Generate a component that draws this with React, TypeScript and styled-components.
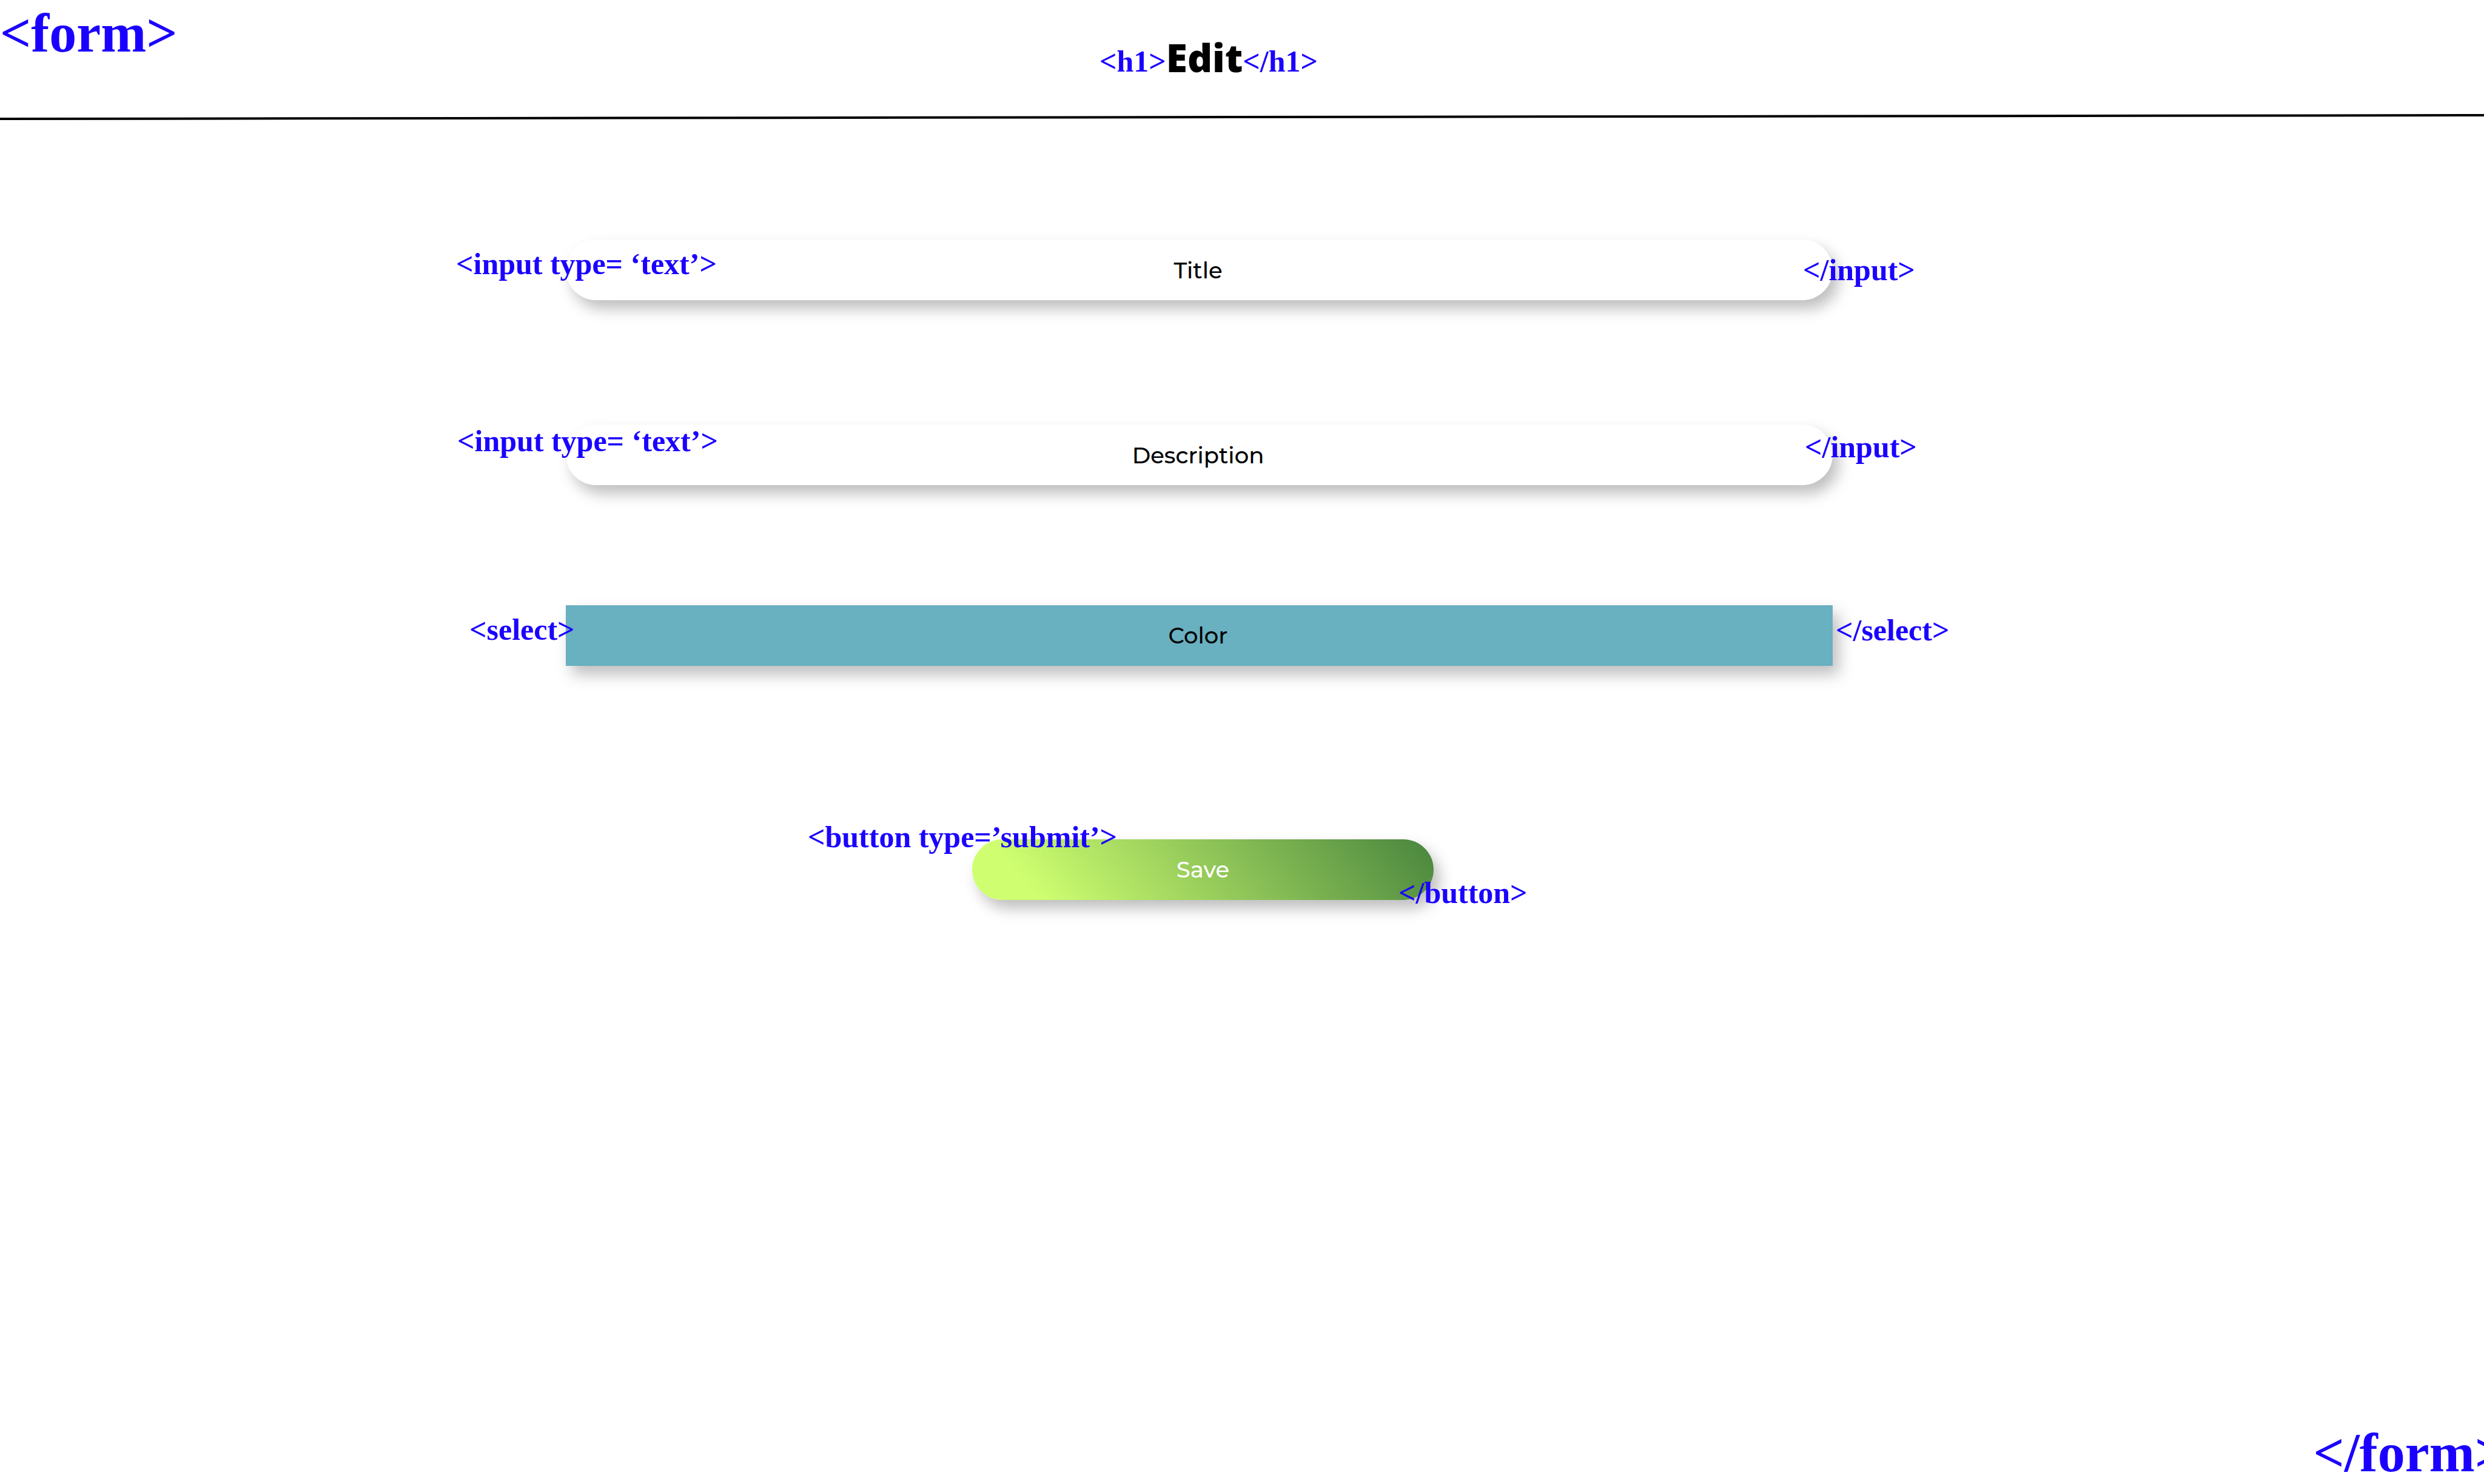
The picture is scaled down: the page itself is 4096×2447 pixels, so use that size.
import React from "react";
import styled, { createGlobalStyle } from "styled-components";

const GlobalStyle = createGlobalStyle`
  *, *::before, *::after { box-sizing: border-box; }
  body { margin: 0; background: #fff; color: #000; overflow-x: hidden; }
`;

const sans = `Montserrat, Inter, "Noto Sans", sans-serif`;
const shadow = "10px 14px 24px rgba(0, 0, 0, 0.26)";

const Form = styled.form`
  display: flex;
  flex-direction: column;
  min-height: 100vh;
  overflow: hidden;
`;

const Header = styled.header`
  display: grid;
  grid-template-columns: 1fr auto 1fr;
  align-items: start;
  height: 188px;
  padding-right: 110px;
`;

const FormTag = styled.span`
  font: bold 90px/110px "Liberation Serif", serif;
  color: #1a00ff;
  white-space: nowrap;
`;

const ClosingFormTag = styled(FormTag)`
  align-self: flex-end;
  margin: auto -36px -4px 0;
`;

const TitleGroup = styled.div`
  display: flex;
  align-items: flex-end;
  grid-column: 2;
  padding-top: 61px;
`;

const Tag = styled.span`
  font: bold 50px/56px "Liberation Serif", serif;
  color: #1a00ff;
  white-space: nowrap;
`;

const Title = styled.h1`
  margin: 0;
  font: 800 64px/68px "Open Sans", sans-serif;
`;

const Rule = styled.svg`
  display: block;
  width: 100%;
  height: 10px;
`;

const Fields = styled.div`
  display: grid;
  grid-template-columns: 933fr 2089fr 1074fr;
  padding-top: 197px;
`;

const Column = styled.div`
  grid-column: 2;
  display: flex;
  flex-direction: column;
  align-items: center;
`;

const Field = styled.div<{ $gap?: number }>`
  position: relative;
  width: 100%;
  margin-top: ${(p) => p.$gap ?? 0}px;
`;

const SubmitField = styled.div`
  position: relative;
  width: 761px;
  margin: 286px 0 0 12px;
`;

const OpenTag = styled(Tag)<{ $x: number; $y: number }>`
  position: absolute;
  left: ${(p) => p.$x}px;
  top: ${(p) => p.$y}px;
`;

const CloseTag = styled(Tag)<{ $x: number; $y: number }>`
  position: absolute;
  left: calc(100% + ${(p) => p.$x}px);
  top: ${(p) => p.$y}px;
`;

const TextInput = styled.input`
  display: block;
  width: 100%;
  height: 100px;
  padding: 0 52px 0 48px;
  border: 0;
  border-radius: 50px;
  background: #fff;
  box-shadow: ${shadow};
  font: 500 37px/48px ${sans};
  text-align: center;
  color: #000;
  &::placeholder { color: #000; opacity: 1; }
`;

const Select = styled.select`
  display: block;
  width: 100%;
  height: 100px;
  padding: 0 52px 0 48px;
  border: 0;
  border-radius: 0;
  appearance: none;
  background: #69b0c0;
  box-shadow: ${shadow};
  font: 500 37px/48px ${sans};
  text-align: center;
  text-align-last: center;
  color: #000;
`;

const SubmitButton = styled.button`
  display: block;
  width: 100%;
  height: 100px;
  border: 0;
  border-radius: 50px;
  background: linear-gradient(50deg, #cfff70 13%, #4c883f 98%);
  box-shadow: ${shadow};
  font: 500 37px/48px ${sans};
  color: #fff;
`;

export default function App() {
  return (
    <>
      <GlobalStyle />
      <Form onSubmit={(e: React.FormEvent) => e.preventDefault()}>
        <Header>
          <FormTag>{"<form>"}</FormTag>
          <TitleGroup>
            <Tag>{"<h1>"}</Tag>
            <Title>Edit</Title>
            <Tag>{"</h1>"}</Tag>
          </TitleGroup>
        </Header>
        <Rule viewBox="0 0 4096 10" preserveAspectRatio="none" aria-hidden="true">
          <line x1="0" y1="8" x2="4096" y2="2" stroke="#000" strokeWidth="4" />
        </Rule>
        <Fields>
          <Column>
            <Field>
              <TextInput id="title" type="text" placeholder="Title" aria-label="Title" />
              <OpenTag as="label" htmlFor="title" $x={-181} $y={12}>{"<input type= ‘text’>"}</OpenTag>
              <CloseTag $x={-49} $y={22}>{"</input>"}</CloseTag>
            </Field>
            <Field $gap={205}>
              <TextInput id="description" type="text" placeholder="Description" aria-label="Description" />
              <OpenTag as="label" htmlFor="description" $x={-179} $y={-1}>{"<input type= ‘text’>"}</OpenTag>
              <CloseTag $x={-46} $y={9}>{"</input>"}</CloseTag>
            </Field>
            <Field $gap={198}>
              <Select id="color" aria-label="Color" defaultValue="color">
                <option value="color">Color</option>
              </Select>
              <OpenTag as="label" htmlFor="color" $x={-159} $y={12}>{"<select>"}</OpenTag>
              <CloseTag $x={5} $y={13}>{"</select>"}</CloseTag>
            </Field>
            <SubmitField>
              <SubmitButton type="submit">Save</SubmitButton>
              <OpenTag $x={-271} $y={-32}>{"<button type=’submit’>"}</OpenTag>
              <CloseTag $x={-58} $y={60}>{"</button>"}</CloseTag>
            </SubmitField>
          </Column>
        </Fields>
        <ClosingFormTag>{"</form>"}</ClosingFormTag>
      </Form>
    </>
  );
}
